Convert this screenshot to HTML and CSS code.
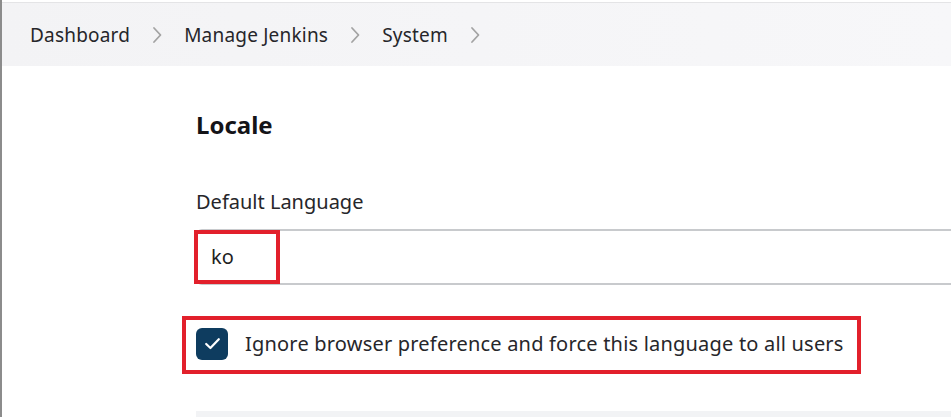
FILE: index.html
```html
<!DOCTYPE html>
<html lang="en">
<head>
<meta charset="utf-8">
<title>System - Jenkins</title>
<link rel="stylesheet" href="styles.css">
</head>
<body>
<div class="page">
  <header class="topbar">
    <nav class="breadcrumbs">
      <span class="crumb">Dashboard</span>
      <svg class="chev" viewBox="0 0 10 18" width="10" height="18"><path d="M2 2 L8.5 9 L2 16" fill="none" stroke="#a3a3a3" stroke-width="1.8" stroke-linecap="round" stroke-linejoin="round"/></svg>
      <span class="crumb">Manage Jenkins</span>
      <svg class="chev" viewBox="0 0 10 18" width="10" height="18"><path d="M2 2 L8.5 9 L2 16" fill="none" stroke="#a3a3a3" stroke-width="1.8" stroke-linecap="round" stroke-linejoin="round"/></svg>
      <span class="crumb">System</span>
      <svg class="chev" viewBox="0 0 10 18" width="10" height="18"><path d="M2 2 L8.5 9 L2 16" fill="none" stroke="#a3a3a3" stroke-width="1.8" stroke-linecap="round" stroke-linejoin="round"/></svg>
    </nav>
  </header>
  <main class="main">
    <aside class="side"></aside>
    <section class="content">
      <h2 class="section-title">Locale</h2>
      <div class="field">
        <label class="field-label">Default Language</label>
        <div class="input-wrap">
          <div class="text-input">ko</div>
          <span class="mark mark-input"></span>
        </div>
      </div>
      <div class="check-row">
        <span class="checkbox">
          <svg viewBox="0 0 16 16" width="16" height="16"><path d="M3.2 8.4 L6.4 11.4 L12.8 4.8" fill="none" stroke="#ffffff" stroke-width="1.7" stroke-linecap="round" stroke-linejoin="round"/></svg>
        </span>
        <span class="check-label">Ignore browser preference and force this language to all users</span>
        <span class="mark mark-check"></span>
      </div>
      <div class="next-section"></div>
    </section>
  </main>
</div>
</body>
</html>
```

FILE: styles.css
```css
html, body {
  margin: 0;
  padding: 0;
  background: #ffffff;
}
body {
  font-family: "Noto Sans", "Open Sans", sans-serif;
  color: #1f1f23;
  overflow: hidden;
}
.page {
  height: 417px;
  border-left: 2px solid #8c8c8c;
  box-sizing: border-box;
  display: flex;
  flex-direction: column;
}
.topbar {
  margin-top: 2px;
  border-top: 1px solid #e4e4e6;
  height: 67px;
  background: linear-gradient(to right, #f3f3f5, #f7f7f9);
  display: flex;
  align-items: center;
  padding-left: 28px;
}
.breadcrumbs {
  display: flex;
  align-items: center;
  gap: 22px;
}
.crumb {
  font-size: 19px;
  line-height: 24px;
  letter-spacing: 0.2px;
  color: #26262a;
}
.chev {
  display: block;
}
.main {
  display: flex;
  flex: 1;
}
.side {
  width: 194px;
  flex-shrink: 0;
}
.content {
  flex: 1;
  display: flex;
  flex-direction: column;
}
.section-title {
  margin: 43px 0 0 0;
  font-size: 24px;
  line-height: 32px;
  font-weight: 700;
  color: #141418;
}
.field {
  margin-top: 48px;
}
.field-label {
  display: block;
  font-size: 20px;
  line-height: 26px;
  color: #26262a;
}
.input-wrap {
  position: relative;
  margin-top: 14px;
}
.text-input {
  height: 52px;
  border: 2px solid #c8cacd;
  border-right: none;
  border-radius: 6px 0 0 6px;
  box-sizing: content-box;
  padding-left: 13px;
  font-size: 20px;
  line-height: 52px;
  color: #1f1f23;
}
.mark {
  position: absolute;
  border: 4px solid #e2202b;
  pointer-events: none;
}
.mark-input {
  left: -2px;
  top: 1px;
  width: 78px;
  height: 46px;
}
.check-row {
  position: relative;
  display: flex;
  align-items: center;
  gap: 17px;
  margin-top: 42px;
  height: 33px;
}
.checkbox {
  width: 32px;
  height: 32px;
  border-radius: 6px;
  background: #0e3c5f;
  display: flex;
  align-items: center;
  justify-content: center;
  flex-shrink: 0;
}
.checkbox svg {
  width: 21px;
  height: 21px;
}
.check-label {
  font-size: 20px;
  line-height: 26px;
  letter-spacing: 0.2px;
  color: #26262a;
}
.mark-check {
  left: -14px;
  top: -11px;
  width: 671px;
  height: 50px;
}
.next-section {
  margin-top: 51px;
  height: 6px;
  background: #f2f3f5;
}
```
